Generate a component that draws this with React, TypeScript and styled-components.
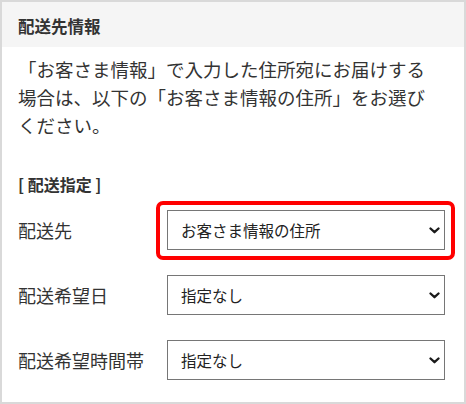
import React from "react";
import styled, { createGlobalStyle } from "styled-components";

const Global = createGlobalStyle`
  html, body { margin: 0; padding: 0; background: #fff; }
  body { font-family: "Noto Sans CJK JP", "Noto Sans", sans-serif; color: #333; }
`;

const Panel = styled.section`
  box-sizing: border-box;
  width: 466px;
  height: 404px;
  border: 2px solid #d9d9d9;
  background: #fff;
  display: flex;
  flex-direction: column;
`;

const Header = styled.h2`
  margin: 0;
  box-sizing: border-box;
  height: 45px;
  padding: 3px 16px 0;
  background: #f5f5f5;
  font-size: 16.5px;
  font-weight: 700;
  line-height: 42px;
  color: #333;
`;

const Lead = styled.p`
  margin: 8px 0 0;
  padding: 0 30px 0 16px;
  font-size: 18.5px;
  line-height: 28px;
  color: #333;
`;

const SectionLabel = styled.h3`
  margin: 34px 0 0;
  padding: 0 16px;
  font-size: 16px;
  font-weight: 700;
  line-height: 22px;
  color: #333;
`;

const Form = styled.div`
  margin-top: 15px;
  padding: 0 19px 0 16px;
  display: flex;
  flex-direction: column;
  gap: 25px;
`;

const Row = styled.div`
  display: grid;
  grid-template-columns: 149px 1fr;
  align-items: center;
  height: 40px;
`;

const Label = styled.label`
  font-size: 18px;
  line-height: 24px;
  color: #333;
  white-space: nowrap;
`;

const SelectWrap = styled.div<{ $highlight?: boolean }>`
  position: relative;
  height: 40px;
  ${(p) =>
    p.$highlight &&
    `
    &::after {
      content: "";
      position: absolute;
      top: -9px;
      left: -11px;
      right: -10px;
      bottom: -10px;
      border: 4px solid #ff0000;
      border-radius: 7px;
      pointer-events: none;
    }
  `}
`;

const Select = styled.select`
  appearance: none;
  -webkit-appearance: none;
  box-sizing: border-box;
  width: 100%;
  height: 40px;
  margin: 0;
  padding: 0 28px 0 13px;
  border: 1px solid #767676;
  border-radius: 0;
  background: #fff;
  font-family: "Noto Sans CJK JP", "Noto Sans", sans-serif;
  font-size: 15.5px;
  color: #222;
  outline: none;
`;

const Chevron = styled.svg`
  position: absolute;
  right: 5px;
  top: 50%;
  width: 11px;
  height: 7px;
  margin-top: -3px;
  pointer-events: none;
`;

function Field({ label, value, highlight }: { label: string; value: string; highlight?: boolean }) {
  return (
    <Row>
      <Label>{label}</Label>
      <SelectWrap $highlight={highlight}>
        <Select defaultValue={value}>
          <option value={value}>{value}</option>
        </Select>
        <Chevron viewBox="0 0 11 7">
          <polyline points="1.5,1.5 5.5,5.2 9.5,1.5" fill="none" stroke="#1a1a1a" strokeWidth="2.3" strokeLinecap="round" strokeLinejoin="round" />
        </Chevron>
      </SelectWrap>
    </Row>
  );
}

export default function App() {
  return (
    <>
      <Global />
      <Panel>
        <Header>配送先情報</Header>
        <Lead>「お客さま情報」で入力した住所宛にお届けする場合は、以下の「お客さま情報の住所」をお選びください。</Lead>
        <SectionLabel>[ 配送指定 ]</SectionLabel>
        <Form>
          <Field label="配送先" value="お客さま情報の住所" highlight />
          <Field label="配送希望日" value="指定なし" />
          <Field label="配送希望時間帯" value="指定なし" />
        </Form>
      </Panel>
    </>
  );
}
